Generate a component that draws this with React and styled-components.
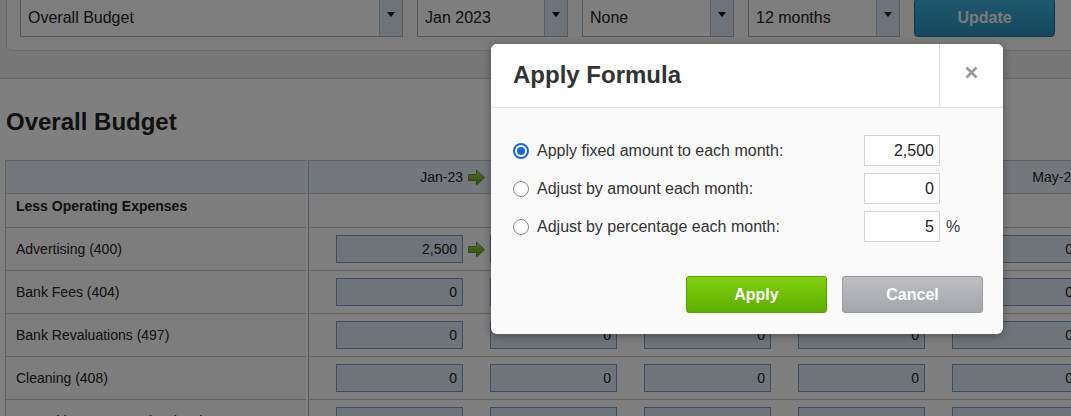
import React from "react"
import styled, { createGlobalStyle } from "styled-components"

const GlobalStyle = createGlobalStyle`
  html, body {
    margin: 0;
    padding: 0;
    overflow: hidden;
    background: #fff;
  }
  body {
    font-family: "Liberation Sans", Arial, sans-serif;
    color: #222;
  }
`

const Page = styled.div`
  position: relative;
  width: 1071px;
  height: 416px;
  overflow: hidden;
`

const TopBar = styled.div`
  height: 79px;
  box-sizing: border-box;
  background: #eeeeee;
  border-bottom: 1px solid #d0d0d0;
  overflow: hidden;
`

const FilterPanel = styled.div`
  display: flex;
  gap: 14px;
  width: 1100px;
  margin: -12px 0 0 6px;
  padding: 9px 0 13px 13px;
  background: #f8f8f8;
  border: 1px solid #d2d2d2;
  border-radius: 6px;
`

const Select = styled.div`
  display: flex;
  width: ${p => p.w}px;
  height: 39px;
  box-sizing: border-box;
  flex: none;
  background: #fdfdfd;
  border: 1px solid #b3b3b3;
  font-size: 16px;
  color: #222;
`

const SelectText = styled.div`
  flex: 1;
  display: flex;
  align-items: center;
  padding-left: 7px;
`

const SelectButton = styled.div`
  width: 23px;
  display: flex;
  justify-content: center;
  padding-top: 13px;
  box-sizing: border-box;
  background: #dce7f5;
  border-left: 1px solid #a6bfdc;
  &::after {
    content: "";
    border-left: 4px solid transparent;
    border-right: 4px solid transparent;
    border-top: 5px solid #111;
    height: 0;
  }
`

const UpdateButton = styled.div`
  width: 141px;
  height: 39px;
  box-sizing: border-box;
  flex: none;
  display: flex;
  align-items: center;
  justify-content: center;
  border-radius: 4px;
  background: linear-gradient(#3fb1dd, #2b8fbc);
  border: 1px solid #1f6f96;
  color: #f4f4f4;
  font-weight: bold;
  font-size: 16px;
`

const Content = styled.div`
  padding-left: 5px;
`

const Heading = styled.h1`
  margin: 29px 0 24px;
  padding-left: 1px;
  font-size: 24px;
  line-height: 28px;
  font-weight: bold;
  color: #222;
`

const Table = styled.div`
  display: flex;
  flex-direction: column;
`

const Row = styled.div`
  display: flex;
  height: ${p => p.h}px;
  background: ${p => (p.head ? "#e8eef6" : "#fff")};
`

const NameCell = styled.div`
  width: 301px;
  flex: none;
  box-sizing: border-box;
  display: flex;
  align-items: center;
  padding: 0 0 ${p => (p.bold ? 10 : 0)}px 10px;
  margin-right: 2px;
  border-left: 1px solid #c6c6c6;
  border-bottom: 1px solid #c6c6c6;
  border-top: ${p => (p.head ? "1px solid #c6c6c6" : "none")};
  background: ${p => (p.head ? "#e8eef6" : "#fbfbfb")};
  font-size: 14px;
  font-weight: ${p => (p.bold ? "bold" : "normal")};
  color: #222;
`

const MonthCell = styled.div`
  width: ${p => (p.first ? 180 : 154)}px;
  flex: none;
  box-sizing: border-box;
  display: flex;
  align-items: center;
  justify-content: flex-end;
  padding-right: ${p => (p.first ? 3 : 25)}px;
  border-left: ${p => (p.first ? "1px solid #9fbbd6" : "none")};
  border-bottom: 1px solid #c6c6c6;
  border-top: ${p => (p.head ? "1px solid #c6c6c6" : "none")};
  font-size: 14px;
  color: #222;
`

const MonthLabel = styled.span`
  line-height: 1;
`

const Amount = styled.input`
  width: 127px;
  height: 28px;
  box-sizing: border-box;
  margin: 0;
  padding: 0 5px 0 0;
  border: 1px solid #7b9cc6;
  background: #dfe8f4;
  text-align: right;
  font-family: inherit;
  font-size: 14px;
  color: #222;
  outline: none;
`

const ArrowIcon = styled.svg`
  margin-left: 5px;
  flex: none;
`

const ArrowSpacer = styled.span`
  width: 17px;
  margin-left: 5px;
  flex: none;
`

const Overlay = styled.div`
  position: absolute;
  inset: 0;
  background: rgba(0, 0, 0, 0.5);
`

const Modal = styled.div`
  position: absolute;
  left: 491px;
  top: 44px;
  width: 512px;
  background: #fafafa;
  border-radius: 6px;
  box-shadow: 0 2px 10px rgba(0, 0, 0, 0.35);
  overflow: hidden;
`

const ModalHeader = styled.div`
  display: flex;
  height: 64px;
  box-sizing: border-box;
  background: #fff;
  border-bottom: 1px solid #e2e2e2;
`

const ModalTitle = styled.div`
  flex: 1;
  display: flex;
  align-items: center;
  padding: 0 0 2px 22px;
  font-size: 24px;
  font-weight: bold;
  color: #333;
`

const CloseBox = styled.div`
  width: 64px;
  display: flex;
  align-items: center;
  justify-content: center;
  padding-bottom: 6px;
  box-sizing: border-box;
  border-left: 1px solid #e2e2e2;
`

const ModalBody = styled.div`
  padding: 27px 20px 21px 22px;
`

const Options = styled.div`
  display: grid;
  grid-template-columns: 351px 76px auto;
  row-gap: 7px;
  align-items: center;
`

const OptionLabel = styled.label`
  display: flex;
  align-items: center;
  gap: 8px;
  font-size: 16px;
  color: #333;
`

const Radio = styled.span`
  width: 16px;
  height: 16px;
  box-sizing: border-box;
  border-radius: 50%;
  flex: none;
  display: flex;
  align-items: center;
  justify-content: center;
  background: #fff;
  border: ${p => (p.checked ? "2px solid #1767d8" : "1.5px solid #8a8a8a")};
  &::after {
    content: "";
    width: 8px;
    height: 8px;
    border-radius: 50%;
    background: ${p => (p.checked ? "#1767d8" : "transparent")};
  }
`

const ValueInput = styled.input`
  width: 76px;
  height: 31px;
  box-sizing: border-box;
  margin: 0;
  padding: 0 5px 0 0;
  border: 1px solid #d6d6d6;
  background: #fff;
  text-align: right;
  font-family: inherit;
  font-size: 16px;
  color: #222;
  outline: none;
`

const Unit = styled.span`
  padding-left: 6px;
  font-size: 16px;
  color: #333;
`

const Footer = styled.div`
  display: flex;
  justify-content: flex-end;
  gap: 15px;
  padding-top: 34px;
`

const Button = styled.div`
  width: ${p => p.w}px;
  height: 37px;
  box-sizing: border-box;
  display: flex;
  align-items: center;
  justify-content: center;
  border-radius: 3px;
  font-size: 16px;
  font-weight: bold;
  color: #fff;
  background: ${p =>
    p.primary
      ? "linear-gradient(#80cf10, #5fae00)"
      : "linear-gradient(#bdbfc3, #a2a5a9)"};
  border: 1px solid ${p => (p.primary ? "#56a300" : "#989b9f")};
`

const months = ["Jan-23", "Feb-23", "Mar-23", "Apr-23", "May-23"]

const accounts = [
  { name: "Advertising (400)", values: ["2,500", "0", "0", "0", "0"] },
  { name: "Bank Fees (404)", values: ["0", "0", "0", "0", "0"] },
  { name: "Bank Revaluations (497)", values: ["0", "0", "0", "0", "0"] },
  { name: "Cleaning (408)", values: ["0", "0", "0", "0", "0"] },
  { name: "Consulting & Accounting (412)", values: ["0", "0", "0", "0", "0"] },
]

const options = [
  { label: "Apply fixed amount to each month:", value: "2,500", checked: true },
  { label: "Adjust by amount each month:", value: "0" },
  { label: "Adjust by percentage each month:", value: "5", unit: "%" },
]

const GreenArrow = () => (
  <ArrowIcon width="17" height="17" viewBox="0 0 17 17">
    <defs>
      <linearGradient id="arrowFill" x1="0" y1="0" x2="0" y2="1">
        <stop offset="0" stopColor="#a9d862" />
        <stop offset="1" stopColor="#5a9a1c" />
      </linearGradient>
    </defs>
    <path
      d="M0.5 5.5H8.5V1L16.5 8.5L8.5 16V11.5H0.5Z"
      fill="url(#arrowFill)"
      stroke="#4d8719"
      strokeWidth="0.8"
      strokeLinejoin="round"
    />
  </ArrowIcon>
)

const App = () => (
  <Page>
    <GlobalStyle />
    <TopBar>
      <FilterPanel>
        <Select w={383}>
          <SelectText>Overall Budget</SelectText>
          <SelectButton />
        </Select>
        <Select w={151}>
          <SelectText>Jan 2023</SelectText>
          <SelectButton />
        </Select>
        <Select w={152}>
          <SelectText>None</SelectText>
          <SelectButton />
        </Select>
        <Select w={152}>
          <SelectText>12 months</SelectText>
          <SelectButton />
        </Select>
        <UpdateButton>Update</UpdateButton>
      </FilterPanel>
    </TopBar>

    <Content>
      <Heading>Overall Budget</Heading>
      <Table>
        <Row h={34} head>
          <NameCell head />
          {months.map((m, i) => (
            <MonthCell key={m} first={i === 0} head>
              <MonthLabel>{m}</MonthLabel>
              {i === 0 && <GreenArrow />}
            </MonthCell>
          ))}
        </Row>
        <Row h={34}>
          <NameCell bold>Less Operating Expenses</NameCell>
          {months.map((m, i) => (
            <MonthCell key={m} first={i === 0} />
          ))}
        </Row>
        {accounts.map(acc => (
          <Row h={43} key={acc.name}>
            <NameCell>{acc.name}</NameCell>
            {acc.values.map((v, i) => (
              <MonthCell key={i} first={i === 0}>
                <Amount readOnly value={v} />
                {i === 0 && (v !== "0" ? <GreenArrow /> : <ArrowSpacer />)}
              </MonthCell>
            ))}
          </Row>
        ))}
      </Table>
    </Content>

    <Overlay />

    <Modal>
      <ModalHeader>
        <ModalTitle>Apply Formula</ModalTitle>
        <CloseBox>
          <svg width="13" height="13" viewBox="0 0 13 13">
            <path d="M1.5 1.5L11.5 11.5M11.5 1.5L1.5 11.5" stroke="#9a9a9a" strokeWidth="2.6" />
          </svg>
        </CloseBox>
      </ModalHeader>
      <ModalBody>
        <Options>
          {options.map(o => (
            <React.Fragment key={o.label}>
              <OptionLabel>
                <Radio checked={o.checked} />
                {o.label}
              </OptionLabel>
              <ValueInput readOnly value={o.value} />
              <Unit>{o.unit || ""}</Unit>
            </React.Fragment>
          ))}
        </Options>
        <Footer>
          <Button primary w={141}>Apply</Button>
          <Button w={141}>Cancel</Button>
        </Footer>
      </ModalBody>
    </Modal>
  </Page>
)

export default App
